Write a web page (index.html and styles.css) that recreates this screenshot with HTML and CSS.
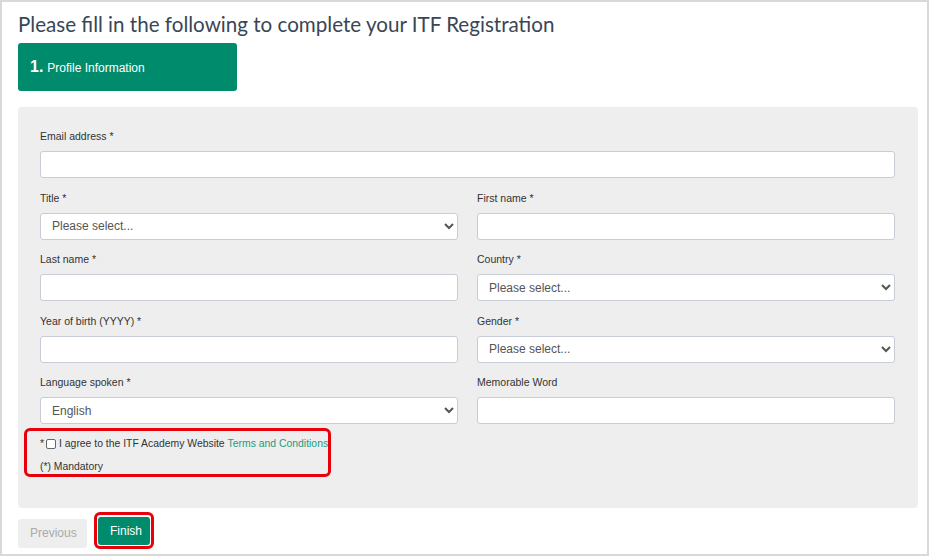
FILE: index.html
```html
<!DOCTYPE html>
<html>
<head>
<meta charset="utf-8">
<link rel="stylesheet" href="styles.css">
</head>
<body>
<div class="frame">
  <h1 class="page-title">Please fill in the following to complete your ITF Registration</h1>
  <div class="step-tab"><span class="step-num">1.</span> <span class="step-label">Profile Information</span></div>
  <form class="panel">
    <div class="field full">
      <label>Email address *</label>
      <input type="text">
    </div>
    <div class="field">
      <label>Title *</label>
      <select><option>Please select...</option></select>
    </div>
    <div class="field">
      <label>First name *</label>
      <input type="text">
    </div>
    <div class="field">
      <label>Last name *</label>
      <input type="text">
    </div>
    <div class="field">
      <label>Country *</label>
      <select><option>Please select...</option></select>
    </div>
    <div class="field">
      <label>Year of birth (YYYY) *</label>
      <input type="text">
    </div>
    <div class="field">
      <label>Gender *</label>
      <select><option>Please select...</option></select>
    </div>
    <div class="field">
      <label>Language spoken *</label>
      <select><option>English</option></select>
    </div>
    <div class="field">
      <label>Memorable Word</label>
      <input type="text">
    </div>
    <div class="terms full">
      <div class="agree">* <span class="box"></span> I agree to the ITF Academy Website <a class="link">Terms and Conditions</a></div>
      <div class="mandatory">(*) Mandatory</div>
      <div class="highlight"></div>
    </div>
  </form>
  <div class="actions">
    <button class="btn prev" type="button">Previous</button>
    <span class="finish-ring"><button class="btn finish" type="button">Finish</button></span>
  </div>
</div>
</body>
</html>
```
FILE: styles.css
```css
html, body { margin: 0; padding: 0; background: #fff; }
.frame {
  width: 929px; height: 556px; box-sizing: border-box;
  border: 2px solid #d9d9d9;
  padding: 0 0 0 16px;
  font-family: "Liberation Sans", Arial, sans-serif;
  color: #333;
}
.page-title {
  margin: 0; padding-top: 9px;
  font-family: Lato, sans-serif; font-weight: 400;
  font-size: 20.6px; line-height: 26px; color: #3a4654;
}
.step-tab {
  margin-top: 6px;
  width: 219px; height: 48px; box-sizing: border-box;
  background: #008c6c; color: #fff; border-radius: 3px;
  padding-left: 12px; display: flex; align-items: center; gap: 4px;
  font-size: 12px;
}
.step-num { font-size: 16px; font-weight: 700; }
.step-label { padding-top: 2px; }
.panel {
  margin-top: 16px; width: 900px; height: 401px; box-sizing: border-box;
  background: #eeeeee; border-radius: 4px;
  padding: 22px 23px 0 22px;
  display: grid; grid-template-columns: 1fr 1fr; column-gap: 19px; row-gap: 12.5px;
  align-content: start;
}
.full { grid-column: 1 / span 2; }
.field { display: flex; flex-direction: column; }
.field label { font-size: 10.5px; line-height: 14px; margin-bottom: 8px; color: #333; }
.field input, .field select {
  height: 27px; box-sizing: border-box; margin: 0;
  border: 1px solid #c8ccd6; border-radius: 3px; background: #fff;
  font-family: "Liberation Sans", Arial, sans-serif; font-size: 12px; color: #555;
  padding: 0 11px;
}
.field select { padding-left: 7px; }
.terms { position: relative; margin-top: 0; font-size: 10.4px; color: #333; }
.agree { display: flex; align-items: center; line-height: 14px; }
.box {
  display: inline-block; width: 8px; height: 8px; margin: 0 3px 0 2px;
  border: 1px solid #666; border-radius: 2px; background: #fff;
}
.link { color: #1c9a80; margin-left: 3px; }
.mandatory { margin-top: 9px; line-height: 14px; }
.highlight {
  position: absolute; left: -16px; top: -9px; width: 307px; height: 49px;
  box-sizing: border-box; border: 3px solid #e8000b; border-radius: 6px;
}
.actions { margin-top: 4px; display: flex; align-items: center; gap: 7px; }
.btn {
  font-family: "Liberation Sans", Arial, sans-serif; font-size: 12px;
  border: none; border-radius: 3px; height: 28px; padding: 0 12px; margin: 0;
}
.prev { background: #eeeeee; color: #aaa; width: 69px; height: 29px; margin-top: 5px; }
.finish { background: #008c6c; color: #fff; width: 52px; }
.finish-ring {
  display: inline-flex; border: 3px solid #e8000b; border-radius: 6px; padding: 2px 1px 1px 1px;
}
```
